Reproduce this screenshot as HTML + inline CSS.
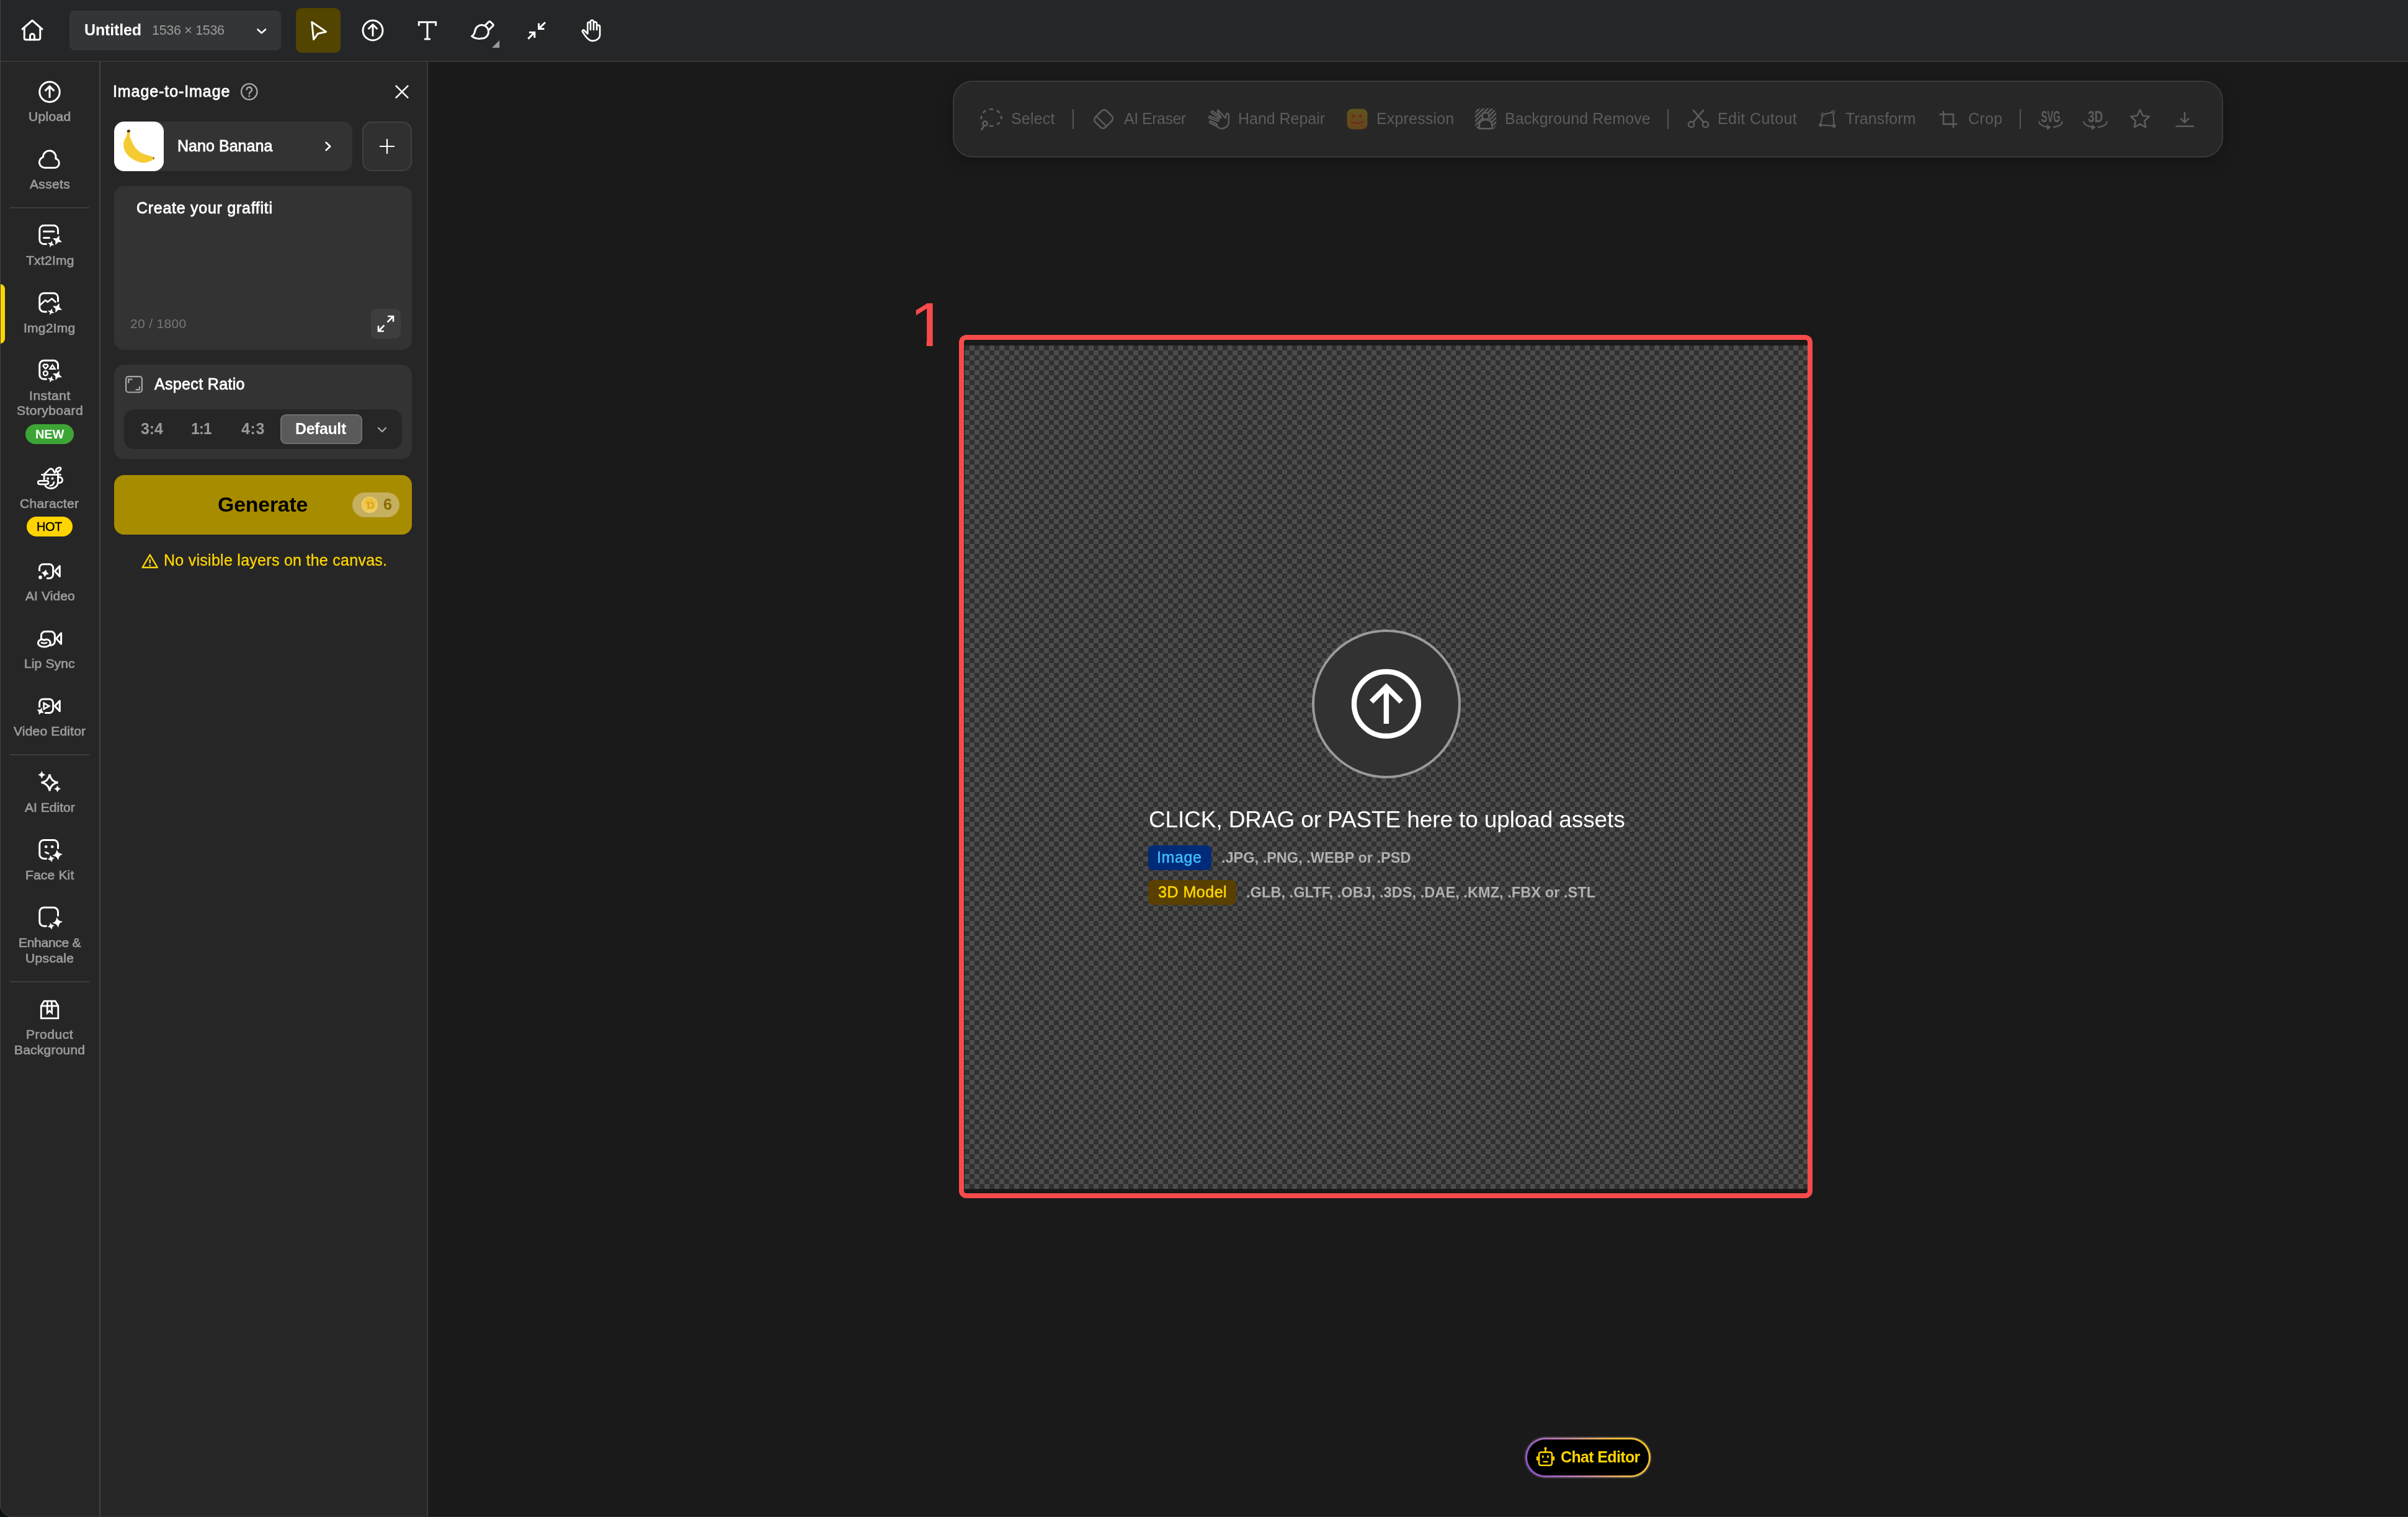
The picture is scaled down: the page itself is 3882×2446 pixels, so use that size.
<!DOCTYPE html>
<html lang="en"><head><meta charset="utf-8"><title>Untitled – Image-to-Image Editor</title>
<style>
*{box-sizing:border-box;margin:0;padding:0}
html,body{width:3882px;height:2446px;overflow:hidden;background:#1a1a1a}
body{position:relative;font-family:"Liberation Sans",sans-serif;color:#fff}
.abs,.tx,.ic{position:absolute}
.tx{white-space:nowrap;display:block;will-change:transform}
.ic{display:block;overflow:visible}
header{position:absolute;left:0;top:0;width:3882px;height:100px;background:#252627;border-bottom:2px solid #363636}
nav{position:absolute;left:0;top:100px;width:162px;height:2346px;background:#262626;border-right:2px solid #424242}
#panel{position:absolute;left:162px;top:100px;width:528px;height:2346px;background:#262626;border-right:2px solid #3a3a3a}
main{position:absolute;left:690px;top:100px;width:3192px;height:2346px;background:#1a1a1a}
.sep{position:absolute;left:16px;width:128px;height:2px;background:#3d3d3d}
.card{position:absolute;background:#333;border-radius:16px}
</style></head><body>

<header>
<svg class="ic" style="left:30px;top:26px" width="44" height="44" viewBox="30 26 44 44"><path d="M36 47L52 33L68 47" stroke="#fff" stroke-width="3" fill="none" stroke-linecap="round" stroke-linejoin="round"/><path d="M39.2 45V61.5a2.5 2.5 0 0 0 2.5 2.5H62.3a2.5 2.5 0 0 0 2.5-2.5V45" stroke="#fff" stroke-width="3" fill="none" stroke-linecap="round" stroke-linejoin="round"/><path d="M48.5 64V58a3.5 3.5 0 0 1 7 0V64" stroke="#fff" stroke-width="3" fill="none" stroke-linecap="round" stroke-linejoin="round"/></svg>
<div class="abs" style="left:112px;top:17px;width:341px;height:64px;border-radius:8px;background:#343537"></div>
<span class="tx" id="t_title" style="left:135.6px;top:36px;font-size:25px;line-height:25px;font-weight:700;color:#ffffff;letter-spacing:-0.139px;">Untitled</span>
<span class="tx" id="t_size" style="left:245px;top:39px;font-size:21.5px;line-height:21.5px;font-weight:400;color:#9c9c9c;letter-spacing:-0.31px;">1536 × 1536</span>
<svg class="ic" style="left:410px;top:42px" width="24" height="16" viewBox="410 42 24 16"><path d="M415.5 47.5L421.7 53.2L428 47.5" stroke="#fff" stroke-width="2.6" fill="none" stroke-linecap="round" stroke-linejoin="round"/></svg>
<div class="abs" style="left:477px;top:13px;width:72px;height:72px;border-radius:9px;background:#534400"></div>
<svg class="ic" style="left:495px;top:28px" width="40" height="44" viewBox="495 28 40 44"><path d="M502.8 35.6L525.6 51.2L512.6 54.2L505.6 63.6Z" stroke="#fff" stroke-width="3" fill="none" stroke-linecap="round" stroke-linejoin="round"/></svg>
<svg class="ic" style="left:581px;top:29px" width="40" height="40" viewBox="581 29 40 40"><circle cx="601" cy="49" r="16" stroke="#fff" stroke-width="3" fill="none" stroke-linecap="round" stroke-linejoin="round"/><path d="M601 58.6V40M593.6 47L601 39.6L608.4 47" stroke="#fff" stroke-width="3" fill="none" stroke-linecap="butt" stroke-linejoin="miter"/></svg>
<svg class="ic" style="left:669px;top:29px" width="40" height="40" viewBox="669 29 40 40"><path d="M675.3 41.8V35.8H702.6V41.8M689 35.8V63M684 63H694" stroke="#fff" stroke-width="3" fill="none"/></svg>
<svg class="ic" style="left:755px;top:29px" width="54" height="52" viewBox="755 29 54 52"><path d="M760.6 58.4C763.8 56.6 765.2 53.4 765.9 49.6A10.9 10.9 0 1 1 776 62.1C770.5 63 764.8 61.6 760.6 58.4Z" stroke="#fff" stroke-width="3" fill="none" stroke-linecap="round" stroke-linejoin="round"/><path d="M781.6 41.3L788 35.2Q789.4 34 790.7 35.2L794.6 39Q795.8 40.3 794.8 41.6L787.6 48.6" stroke="#fff" stroke-width="3" fill="none" stroke-linecap="round" stroke-linejoin="round"/><path d="M805.2 64.9V77H793.1Z" fill="#9a9a9a"/></svg>
<svg class="ic" style="left:845px;top:29px" width="40" height="40" viewBox="845 29 40 40"><path d="M879 36L868.6 46.4M868.6 37.6V46.4H877.4M851.4 62.6L861.8 52.2M853 52.2H861.8V61" stroke="#fff" stroke-width="3" fill="none"/></svg>
<svg class="ic" style="left:933px;top:29px" width="40" height="42" viewBox="933 29 40 42"><path d="M947.3 54.4V38.2a2.35 2.35 0 0 1 4.7 0V48M952 38V35a2.5 2.5 0 0 1 5 0V48M957 38.5V38a2.55 2.55 0 0 1 5.1 0V48M962.1 44V43.2a2.5 2.5 0 0 1 5 0V56C967.1 62 961.5 65.9 954.8 65.9C950 65.9 946.5 62 943 57L939.3 51.5C938 49.5 940.3 47.5 942 49.3L947.3 54.4" stroke="#fff" fill="none" stroke-linecap="round" stroke-linejoin="round" stroke-width="2.7"/></svg>
</header>

<nav>
<div class="abs" style="left:0;top:358px;width:8px;height:96px;background:#ffd600;border-radius:0 8px 8px 0"></div>
<svg class="ic" style="left:60px;top:28px" width="40" height="40" viewBox="60 128 40 40"><circle cx="80" cy="148.2" r="16.2" stroke="#fff" stroke-width="3" fill="none" stroke-linecap="round" stroke-linejoin="round"/><path d="M80 157.8V139.4M72.6 146.6L80 139.2L87.4 146.6" stroke="#fff" stroke-width="3" fill="none" stroke-linecap="butt" stroke-linejoin="miter"/></svg>
<span class="tx" id="s_upload" style="left:45.7px;top:77px;font-size:21px;line-height:21px;font-weight:400;color:#9b9b9b;letter-spacing:0.346px;-webkit-text-stroke:0.7px #9b9b9b;">Upload</span>
<svg class="ic" style="left:60px;top:137px" width="40" height="40" viewBox="60 237 40 40"><path d="M72.3 270.6H88.3A7.6 7.6 0 0 0 89.7 255.7A10.3 10.3 0 1 0 69.4 253.3A8.9 8.9 0 0 0 72.3 270.6Z" stroke="#fff" stroke-width="3" fill="none" stroke-linecap="round" stroke-linejoin="round"/></svg>
<span class="tx" id="s_assets" style="left:47.8px;top:186px;font-size:21px;line-height:21px;font-weight:400;color:#9b9b9b;letter-spacing:0.336px;-webkit-text-stroke:0.7px #9b9b9b;">Assets</span>
<div class="sep" style="top:234px"></div>
<svg class="ic" style="left:60px;top:258px" width="42" height="42" viewBox="60 358 42 42"><path d="M74.5 393.5H70.8a7 7 0 0 1-7-7V370.5a7 7 0 0 1 7-7H86.5a7 7 0 0 1 7 7V376.5" stroke="#fff" stroke-width="3" fill="none" stroke-linecap="round" stroke-linejoin="round"/><path d="M70.5 373.3H87M70.5 383.6H79.5" stroke="#fff" stroke-width="3" fill="none" stroke-linecap="round" stroke-linejoin="round"/><path d="M95.2 380.4L95.2 386.1L99.4 390L93.7 390L89.8 394.2L89.8 388.5L85.6 384.6L91.3 384.6Z" fill="#fff" stroke="#fff" stroke-width="0.8" stroke-linejoin="round"/><path d="M83.8 388.8L84 392.6L87 395L83.2 395.2L80.8 398.2L80.6 394.4L77.6 392L81.4 391.8Z" fill="#fff" stroke="#fff" stroke-width="0.6" stroke-linejoin="round"/></svg>
<span class="tx" id="s_txt" style="left:41.7px;top:309px;font-size:21px;line-height:21px;font-weight:400;color:#9b9b9b;letter-spacing:0.272px;-webkit-text-stroke:0.7px #9b9b9b;">Txt2Img</span>
<svg class="ic" style="left:60px;top:367px" width="42" height="42" viewBox="60 467 42 42"><path d="M74.5 502.7H70.8a7 7 0 0 1-7-7V479.7a7 7 0 0 1 7-7H86.5a7 7 0 0 1 7 7V485.7" stroke="#fff" stroke-width="3" fill="none" stroke-linecap="round" stroke-linejoin="round"/><path d="M65 491.5L73.3 484L76.7 487L83.7 481.5L89.5 487" stroke="#fff" fill="none" stroke-linecap="round" stroke-linejoin="round" stroke-width="2.6"/><path d="M95.2 489.7L95.2 495.4L99.4 499.3L93.7 499.3L89.8 503.5L89.8 497.8L85.6 493.9L91.3 493.9Z" fill="#fff" stroke="#fff" stroke-width="0.8" stroke-linejoin="round"/><path d="M83.8 498.1L84 501.9L87 504.3L83.2 504.5L80.8 507.5L80.6 503.7L77.6 501.3L81.4 501.1Z" fill="#fff" stroke="#fff" stroke-width="0.6" stroke-linejoin="round"/></svg>
<span class="tx" id="s_img" style="left:38.4px;top:418px;font-size:21px;line-height:21px;font-weight:400;color:#9b9b9b;letter-spacing:0.264px;-webkit-text-stroke:0.7px #9b9b9b;">Img2Img</span>
<svg class="ic" style="left:60px;top:476px" width="42" height="42" viewBox="60 576 42 42"><path d="M74.5 611.3H70.8a7 7 0 0 1-7-7V588.3a7 7 0 0 1 7-7H86.5a7 7 0 0 1 7 7V594.3" stroke="#fff" stroke-width="3" fill="none" stroke-linecap="round" stroke-linejoin="round"/><g stroke="#fff" stroke-width="2.4" fill="none" stroke-linejoin="round"><path d="M73.5 594.6L69.7 590.7a2.35 2.35 0 0 1 3.8-2.5a2.35 2.35 0 0 1 3.8 2.5Z"/><path d="M84.6 588.6L88.7 594.7H80.5Z" stroke-linejoin="miter"/><circle cx="73.4" cy="601.9" r="3.5"/></g><path d="M95.2 598.4L95.2 604.1L99.4 608L93.7 608L89.8 612.2L89.8 606.5L85.6 602.6L91.3 602.6Z" fill="#fff" stroke="#fff" stroke-width="0.8" stroke-linejoin="round"/><path d="M83.8 606.7L84 610.5L87 612.9L83.2 613.1L80.8 616.1L80.6 612.3L77.6 609.9L81.4 609.7Z" fill="#fff" stroke="#fff" stroke-width="0.6" stroke-linejoin="round"/></svg>
<span class="tx" id="s_inst" style="left:46.5px;top:527px;font-size:21px;line-height:21px;font-weight:400;color:#9b9b9b;letter-spacing:0.549px;-webkit-text-stroke:0.7px #9b9b9b;">Instant</span>
<span class="tx" id="s_story" style="left:27px;top:551px;font-size:21px;line-height:21px;font-weight:400;color:#9b9b9b;letter-spacing:0.44px;-webkit-text-stroke:0.7px #9b9b9b;">Storyboard</span>
<div class="abs" style="left:41px;top:584px;width:78px;height:32px;border-radius:16px;background:#3da536"></div>
<span class="tx" id="s_new" style="left:56.5px;top:590px;font-size:20px;line-height:20px;font-weight:700;color:#ffffff;letter-spacing:-0.192px;">NEW</span>
<svg class="ic" style="left:58px;top:650px" width="46" height="44" viewBox="58 750 46 44"><g stroke="#fff" fill="none" stroke-linecap="round" stroke-linejoin="round" stroke-width="2.8"><path d="M67.5 765.4H97.3"/><path d="M71.3 764.8L79.8 756.6Q82.3 754.6 85 757L88 762.2Q89.8 760.8 90.3 759.6"/><path d="M92.7 760.4L93.6 764.2"/><path d="M71.2 766V774.5M72.5 782.3C74 785.8 78 787.5 82.2 787.5C88.5 787.5 93.5 783 93.5 777V766"/><rect x="61.3" y="775.4" width="16.7" height="5.4" rx="2.7"/><path d="M95 769.4a4.7 4.7 0 1 1 0 9.2"/><ellipse cx="94.1" cy="757.1" rx="4.5" ry="2.5" transform="rotate(-32 94.1 757.1)"/><path d="M86.9 777.6Q86.2 782.3 81 783.2"/></g><circle cx="77.1" cy="771.4" r="2" fill="#fff"/><circle cx="84.5" cy="771.4" r="2" fill="#fff"/></svg>
<span class="tx" id="s_char" style="left:32.1px;top:701px;font-size:21px;line-height:21px;font-weight:400;color:#9b9b9b;letter-spacing:0.361px;-webkit-text-stroke:0.7px #9b9b9b;">Character</span>
<div class="abs" style="left:43px;top:733px;width:74px;height:32px;border-radius:16px;background:#ffd400"></div>
<span class="tx" id="s_hot" style="left:58.8px;top:739px;font-size:20px;line-height:20px;font-weight:400;color:#000000;letter-spacing:-0.45px;-webkit-text-stroke:0.4px #000;">HOT</span>
<svg class="ic" style="left:58px;top:800px" width="46" height="42" viewBox="58 900 46 42"><path d="M63.6 921V915.7a6 6 0 0 1 6-6H79.6a6 6 0 0 1 6 6V926.4a6 6 0 0 1-6 6H75.1" stroke="#fff" stroke-width="3" fill="none" stroke-linejoin="round" stroke-linecap="butt"/><path d="M88.4 921L96.3 912.6V929.6Z" stroke="#fff" stroke-width="3" fill="none" stroke-linecap="round" stroke-linejoin="round"/><path d="M73.9 918.8L75.2 922.7L78.4 925.3L74.5 926.6L71.9 929.8L70.6 925.9L67.4 923.3L71.3 922Z" fill="#fff" stroke="#fff" stroke-width="0.6" stroke-linejoin="round"/><circle cx="65" cy="930.9" r="2.8" fill="#fff"/></svg>
<span class="tx" id="s_aiv" style="left:40.5px;top:850px;font-size:21px;line-height:21px;font-weight:400;color:#9b9b9b;letter-spacing:0.082px;-webkit-text-stroke:0.7px #9b9b9b;">AI Video</span>
<svg class="ic" style="left:56px;top:910px" width="50" height="40" viewBox="56 1010 50 40"><path d="M66.5 1030V1024.7a6.5 6.5 0 0 1 6.5-6.5H81.9a6.5 6.5 0 0 1 6.5 6.5V1033.9a6.5 6.5 0 0 1-6.5 6.5H79" stroke="#fff" stroke-width="3" fill="none" stroke-linecap="round" stroke-linejoin="round"/><path d="M90.7 1029.4L98.6 1020.8V1038.2Z" stroke="#fff" stroke-width="3" fill="none" stroke-linecap="round" stroke-linejoin="round"/><path d="M61.4 1037C61.4 1033.5 64.5 1031 68 1031C69.6 1031 70.4 1032 71.3 1032C72.2 1032 73 1031 74.6 1031C78.1 1031 81.2 1033.5 81.2 1037C81.2 1040.3 77 1043 71.3 1043C65.6 1043 61.4 1040.3 61.4 1037Z" fill="#262626" stroke="#fff" stroke-width="3" stroke-linejoin="round"/><path d="M67 1036.4Q71.1 1038.2 75.2 1036.4" stroke="#fff" stroke-width="2.6" fill="none" stroke-linecap="round"/></svg>
<span class="tx" id="s_lip" style="left:39px;top:959px;font-size:21px;line-height:21px;font-weight:400;color:#9b9b9b;letter-spacing:0.137px;-webkit-text-stroke:0.7px #9b9b9b;">Lip Sync</span>
<svg class="ic" style="left:58px;top:1020px" width="46" height="40" viewBox="58 1120 46 40"><path d="M63.6 1140.7V1133.3a6 6 0 0 1 6-6H79.6a6 6 0 0 1 6 6V1143.4a6 6 0 0 1-6 6H72.3" stroke="#fff" stroke-width="3" fill="none" stroke-linejoin="round" stroke-linecap="butt"/><path d="M88.4 1138.4L96.3 1130V1146.8Z" stroke="#fff" stroke-width="3" fill="none" stroke-linecap="round" stroke-linejoin="round"/><path d="M70.7 1133.7L79.3 1138.5L70.7 1143.3Z" stroke="#fff" stroke-width="2.6" fill="none" stroke-linejoin="miter"/><path d="M67.5 1141.7L67.6 1145.9L70.3 1149.1L66.1 1149.2L62.9 1151.9L62.8 1147.7L60.1 1144.5L64.3 1144.4Z" fill="#fff" stroke="#fff" stroke-width="0.6" stroke-linejoin="round"/></svg>
<span class="tx" id="s_ved" style="left:22.2px;top:1068px;font-size:21px;line-height:21px;font-weight:400;color:#9b9b9b;letter-spacing:0.188px;-webkit-text-stroke:0.7px #9b9b9b;">Video Editor</span>
<div class="sep" style="top:1116px"></div>
<svg class="ic" style="left:58px;top:1140px" width="44" height="44" viewBox="58 1240 44 44"><path d="M80 1248.4Q81.9 1259.9 93.4 1261.8Q81.9 1263.7 80 1275.2Q78.1 1263.7 66.6 1261.8Q78.1 1259.9 80 1248.4Z" stroke="#fff" fill="none" stroke-linecap="round" stroke-width="3" stroke-linejoin="miter"/><path d="M67.3 1243.8Q68.1 1248.5 72.8 1249.3Q68.1 1250.1 67.3 1254.8Q66.5 1250.1 61.8 1249.3Q66.5 1248.5 67.3 1243.8Z" fill="#fff" stroke="#fff" stroke-width="0.7" stroke-linejoin="round"/><path d="M92.6 1267Q93.3 1271.2 97.5 1271.9Q93.3 1272.6 92.6 1276.8Q91.9 1272.6 87.7 1271.9Q91.9 1271.2 92.6 1267Z" fill="#fff" stroke="#fff" stroke-width="0.7" stroke-linejoin="round"/></svg>
<span class="tx" id="s_aie" style="left:39.9px;top:1191px;font-size:21px;line-height:21px;font-weight:400;color:#9b9b9b;letter-spacing:0.02px;-webkit-text-stroke:0.7px #9b9b9b;">AI Editor</span>
<svg class="ic" style="left:60px;top:1250px" width="42" height="42" viewBox="60 1350 42 42"><path d="M74.5 1384.4H70.8a7 7 0 0 1-7-7V1361.4a7 7 0 0 1 7-7H86.5a7 7 0 0 1 7 7V1367.4" stroke="#fff" stroke-width="3" fill="none" stroke-linecap="round" stroke-linejoin="round"/><circle cx="74.2" cy="1365.3" r="2.3" fill="#fff"/><circle cx="84.2" cy="1365.3" r="2.3" fill="#fff"/><path d="M73.3 1374.2L78 1376.2" stroke="#fff" fill="none" stroke-linecap="round" stroke-linejoin="round" stroke-width="2.8"/><path d="M91.6 1370.9Q93.8 1376.9 100.2 1377.3Q94.2 1379.5 93.8 1385.9Q91.6 1379.9 85.2 1379.5Q91.2 1377.3 91.6 1370.9Z" fill="#fff" stroke="#fff" stroke-width="0.9" stroke-linejoin="round"/><path d="M81.3 1379.6Q83 1383.5 87.2 1383.5Q83.3 1385.2 83.3 1389.4Q81.6 1385.5 77.4 1385.5Q81.3 1383.8 81.3 1379.6Z" fill="#fff" stroke="#fff" stroke-width="0.7" stroke-linejoin="round"/></svg>
<span class="tx" id="s_face" style="left:40.5px;top:1300px;font-size:21px;line-height:21px;font-weight:400;color:#9b9b9b;letter-spacing:0.172px;-webkit-text-stroke:0.7px #9b9b9b;">Face Kit</span>
<svg class="ic" style="left:60px;top:1359px" width="42" height="42" viewBox="60 1459 42 42"><path d="M74.5 1493.3H70.8a7 7 0 0 1-7-7V1470.3a7 7 0 0 1 7-7H86.5a7 7 0 0 1 7 7V1476.3" stroke="#fff" stroke-width="3" fill="none" stroke-linecap="round" stroke-linejoin="round"/><path d="M91.6 1479.7Q93.8 1485.7 100.2 1486.1Q94.2 1488.3 93.8 1494.7Q91.6 1488.7 85.2 1488.3Q91.2 1486.1 91.6 1479.7Z" fill="#fff" stroke="#fff" stroke-width="0.9" stroke-linejoin="round"/><path d="M81.3 1488.4Q83 1492.3 87.2 1492.3Q83.3 1494 83.3 1498.2Q81.6 1494.3 77.4 1494.3Q81.3 1492.6 81.3 1488.4Z" fill="#fff" stroke="#fff" stroke-width="0.7" stroke-linejoin="round"/></svg>
<span class="tx" id="s_enh" style="left:29.6px;top:1409px;font-size:21px;line-height:21px;font-weight:400;color:#9b9b9b;letter-spacing:-0.292px;-webkit-text-stroke:0.7px #9b9b9b;">Enhance &amp;</span>
<span class="tx" id="s_ups" style="left:41px;top:1434px;font-size:21px;line-height:21px;font-weight:400;color:#9b9b9b;letter-spacing:0.352px;-webkit-text-stroke:0.7px #9b9b9b;">Upscale</span>
<div class="sep" style="top:1482px"></div>
<svg class="ic" style="left:60px;top:1508px" width="40" height="40" viewBox="60 1608 40 40"><path d="M66.3 1622L71.2 1614.1H89L93.8 1622V1641.8H66.3Z" stroke="#fff" stroke-width="2.8" fill="none" stroke-linejoin="miter"/><path d="M66.3 1622H93.8" stroke="#fff" stroke-width="2.8"/><path d="M76.7 1614.1L76.2 1622V1633.4L79.9 1630L83.6 1633.4V1622L83.2 1614.1" stroke="#fff" stroke-width="2.8" fill="none"/></svg>
<span class="tx" id="s_prod" style="left:41.7px;top:1557px;font-size:21px;line-height:21px;font-weight:400;color:#9b9b9b;letter-spacing:0.527px;-webkit-text-stroke:0.7px #9b9b9b;">Product</span>
<span class="tx" id="s_bg" style="left:22.8px;top:1582px;font-size:21px;line-height:21px;font-weight:400;color:#9b9b9b;letter-spacing:0.212px;-webkit-text-stroke:0.7px #9b9b9b;">Background</span>
</nav>

<section id="panel">
<span class="tx" id="p_title" style="left:20.2px;top:35px;font-size:25px;line-height:25px;font-weight:400;color:#ffffff;letter-spacing:0.918px;-webkit-text-stroke:0.8px #fff;">Image-to-Image</span>
<svg class="ic" style="left:224px;top:32px" width="32" height="32" viewBox="386 132 32 32"><circle cx="401.8" cy="147.8" r="12.7" stroke="#a8a8a8" stroke-width="2.4" fill="none"/><path d="M397.7 144.6a4.1 4.1 0 1 1 6.1 3.6c-1.4.800-2 1.6-2 3.1" stroke="#a8a8a8" stroke-width="2.4" fill="none" stroke-linecap="round"/><circle cx="401.8" cy="154.9" r="1.5" fill="#a8a8a8"/></svg>
<svg class="ic" style="left:472px;top:34px" width="28" height="28" viewBox="634 134 28 28"><path d="M638.6 138.6L657.4 157.4M657.4 138.6L638.6 157.4" stroke="#fff" stroke-width="2.6" stroke-linecap="round"/></svg>
<div class="card" style="left:22px;top:96px;width:384px;height:80px;border-radius:15px"></div>
<div class="abs" style="left:22px;top:96px;width:80px;height:80px;border-radius:16px;background:#fff"></div>
<svg class="ic" style="left:22px;top:96px" width="80" height="80" viewBox="184 196 80 80"><path d="M205.2 213C204.8 216 204.5 218.5 203.6 220.2C201.5 223.5 199.6 226.5 199.2 232C198.8 238 200.5 243 204 247.5C209 254.5 217 259.5 227 262C234 263.3 241.5 261.5 248.3 256.6L247 253.2C243 251.6 238 250.6 233 248.8C225 246 219 240.5 215.3 233.5C212.8 228.5 210.4 224.5 209.3 220C208.8 217.5 209 215.5 209.3 213Z" fill="#f5cb31"/><ellipse cx="207.3" cy="211.3" rx="2.7" ry="2.2" fill="#5c3310" transform="rotate(-15 207.3 211.3)"/><ellipse cx="247.7" cy="255.1" rx="0.9" ry="1.8" fill="#5c3310" transform="rotate(-15 247.7 255.1)"/></svg>
<span class="tx" id="p_model" style="left:124.3px;top:123px;font-size:25px;line-height:25px;font-weight:400;color:#ffffff;letter-spacing:0.04px;-webkit-text-stroke:0.8px #fff;">Nano Banana</span>
<svg class="ic" style="left:356px;top:124px" width="20" height="24" viewBox="518 224 20 24"><path d="M525.6 229.8L532.2 236L525.6 242.2" stroke="#fff" stroke-width="2.6" fill="none" stroke-linecap="round" stroke-linejoin="round"/></svg>
<div class="abs" style="left:422px;top:96px;width:80px;height:80px;border-radius:15px;background:#303030;border:2px solid #414141"></div>
<svg class="ic" style="left:446px;top:120px" width="32" height="32" viewBox="608 220 32 32"><path d="M612 236H636M624 224V248" stroke="#fff" stroke-width="2.2"/></svg>
<div class="card" style="left:22px;top:200px;width:480px;height:264px"></div>
<span class="tx" id="p_prompt" style="left:57.5px;top:223px;font-size:25px;line-height:25px;font-weight:400;color:#ffffff;letter-spacing:0.73px;-webkit-text-stroke:0.8px #fff;">Create your graffiti</span>
<span class="tx" id="p_count" style="left:47.5px;top:411px;font-size:21px;line-height:21px;font-weight:400;color:#787878;letter-spacing:0.325px;">20 / 1800</span>
<div class="abs" style="left:436px;top:398px;width:48px;height:48px;border-radius:9px;background:#3e3e3e"></div>
<svg class="ic" style="left:436px;top:398px" width="48" height="48" viewBox="598 498 48 48"><path d="M634 510L624.5 519.5M625.2 510H634V518.8M610 534L619.5 524.5M610 525.2V534H618.8" stroke="#fff" stroke-width="2.6" fill="none"/></svg>
<div class="card" style="left:22px;top:488px;width:480px;height:152px"></div>
<svg class="ic" style="left:38px;top:504px" width="32" height="32" viewBox="200 604 32 32"><rect x="203.1" y="607.1" width="25.8" height="25.4" rx="4" stroke="#a8a8a8" stroke-width="2.2" fill="none"/><path d="M207.2 617.8V611.6H213.4M218.6 628.4H224.8V623" stroke="#a8a8a8" stroke-width="2.2" fill="none"/></svg>
<span class="tx" id="p_aspect" style="left:86.6px;top:507px;font-size:25px;line-height:25px;font-weight:400;color:#ffffff;letter-spacing:0.343px;-webkit-text-stroke:0.8px #fff;">Aspect Ratio</span>
<div class="abs" style="left:38px;top:560px;width:448px;height:64px;border-radius:16px;background:#262626"></div>
<span class="tx" id="p_r34" style="left:64.6px;top:579px;font-size:25px;line-height:25px;font-weight:700;color:#9a9a9a;letter-spacing:-0.065px;">3:4</span>
<span class="tx" id="p_r11" style="left:145.99px;top:579px;font-size:25px;line-height:25px;font-weight:700;color:#9a9a9a;letter-spacing:-1.2px;">1:1</span>
<span class="tx" id="p_r43" style="left:226.7px;top:579px;font-size:25px;line-height:25px;font-weight:700;color:#9a9a9a;letter-spacing:0.685px;">4:3</span>
<div class="abs" style="left:290px;top:568px;width:132px;height:48px;border-radius:9px;background:#5a5a5a;border:2px solid #707070"></div>
<span class="tx" id="p_def" style="left:314.3px;top:579px;font-size:25px;line-height:25px;font-weight:700;color:#ffffff;letter-spacing:-0.417px;">Default</span>
<svg class="ic" style="left:442px;top:582px" width="24" height="20" viewBox="604 682 24 20"><path d="M610 690L616 696L622 690" stroke="#a8a8a8" stroke-width="2.4" fill="none" stroke-linecap="round" stroke-linejoin="round"/></svg>
<div class="abs" style="left:22px;top:666px;width:480px;height:96px;border-radius:16px;background:#a88c00"></div>
<span class="tx" id="p_gen" style="left:189.4px;top:697px;font-size:33.8px;line-height:33.8px;font-weight:700;color:#000000;letter-spacing:-0.161px;">Generate</span>
<div class="abs" style="left:406px;top:694px;width:76px;height:40px;border-radius:20px;background:#c4b05e"></div>
<svg class="ic" style="left:418px;top:698px" width="32" height="32" viewBox="580 798 32 32"><defs><linearGradient id="cg" x1="0" y1="0" x2="0" y2="1"><stop offset="0" stop-color="#eebd38"/><stop offset="1" stop-color="#f1cf5e"/></linearGradient></defs><circle cx="595.9" cy="813.9" r="13.2" fill="#f0cd66"/><circle cx="595.9" cy="813.9" r="10.8" fill="url(#cg)"/><path d="M592.4 808.9H595.4V820.9H592.4V811.4L590.9 811.9V809.7ZM596.8 808.9C605.2 808.9 605.2 820.9 596.8 820.9V818C601.6 818 601.6 811.8 596.8 811.8Z" fill="#d8a616"/></svg>
<span class="tx" id="p_cost" style="left:455.8px;top:701px;font-size:25px;line-height:25px;font-weight:700;color:#876900;letter-spacing:0px;">6</span>
<svg class="ic" style="left:64px;top:790px" width="32" height="30" viewBox="226 890 32 30"><path d="M241.7 894.6L253.8 915H229.6Z" stroke="#ffd600" stroke-width="2.4" fill="none" stroke-linejoin="round"/><path d="M241.7 901.8V908.4" stroke="#ffd600" stroke-width="2.4"/><circle cx="241.7" cy="911.7" r="1.4" fill="#ffd600"/></svg>
<span class="tx" id="p_warn" style="left:101.9px;top:791px;font-size:25px;line-height:25px;font-weight:400;color:#ffd600;letter-spacing:0.274px;-webkit-text-stroke:0.3px #ffd600;">No visible layers on the canvas.</span>
</section>

<main>
<div class="abs" style="left:846px;top:30px;width:2048px;height:124px;border-radius:32px;background:#272727;border:2px solid #383838;box-shadow:0 8px 24px rgba(0,0,0,.25)"></div>
<svg class="ic" style="left:888px;top:70px" width="40" height="42" viewBox="1578 170 40 42"><path d="M1601.3 176.3A16.1 13.6 0 0 0 1594.9 176.3M1611.5 182.1A16.1 13.6 0 0 0 1607 178.3M1613.9 192.3A16.1 13.6 0 0 0 1613.9 186.9M1607 200.9A16.1 13.6 0 0 0 1611.5 197.1M1594.9 202.9A16.1 13.6 0 0 0 1601.3 202.9M1582.3 186.9A16.1 13.6 0 0 0 1582.3 192.3M1589.2 178.3A16.1 13.6 0 0 0 1584.7 182.1" stroke="#5c5c5c" stroke-width="2.7" fill="none"/><circle cx="1588" cy="199.3" r="3.6" stroke="#5c5c5c" stroke-width="2.8" fill="none"/><path d="M1586.2 202.6L1582.7 209" stroke="#5c5c5c" stroke-width="2.8" stroke-linecap="round"/></svg>
<span class="tx" id="b_select" style="left:940.3px;top:79px;font-size:25px;line-height:25px;font-weight:400;color:#5c5c5c;letter-spacing:0.173px;">Select</span>
<div class="abs" style="left:1039px;top:76px;width:2px;height:32px;background:#555"></div>
<svg class="ic" style="left:1070px;top:74px" width="38" height="38" viewBox="1760 174 38 38"><g transform="translate(1779.1 192) rotate(45)" stroke="#5c5c5c" stroke-width="2.6" fill="none" stroke-linecap="round" stroke-linejoin="round"><rect x="-11.5" y="-12.8" width="23" height="25.6" rx="5.5"/><path d="M-11.5 5H11.5"/></g></svg>
<span class="tx" id="b_eraser" style="left:1122.1px;top:79px;font-size:25px;line-height:25px;font-weight:400;color:#5c5c5c;letter-spacing:-0.509px;">AI Eraser</span>
<svg class="ic" style="left:1256px;top:72px" width="40" height="40" viewBox="1946 172 40 40"><path d="M1951.6 196.9L1960.5 201" stroke="#5c5c5c" stroke-width="5.4" stroke-linecap="round"/><path d="M1951.6 196.9L1960.5 201" stroke="#272727" stroke-width="1" stroke-linecap="round"/><path d="M1950.6 188.9L1963 193.8" stroke="#5c5c5c" stroke-width="5.4" stroke-linecap="round"/><path d="M1950.6 188.9L1963 193.8" stroke="#272727" stroke-width="1" stroke-linecap="round"/><path d="M1954.3 180.8L1966.6 189" stroke="#5c5c5c" stroke-width="5.4" stroke-linecap="round"/><path d="M1954.3 180.8L1966.6 189" stroke="#272727" stroke-width="1" stroke-linecap="round"/><path d="M1962.8 178.6L1966.6 189M1963.6 177.3L1975.5 190.3L1977 184.3Q1978 181.6 1980 183.2Q1980.9 184 1980.9 185.5V196.5C1980.9 203.5 1975 207.3 1969.6 207.3C1966 207.3 1964 205.6 1961 203.4L1952 198.5" stroke="#5c5c5c" stroke-width="2.4" fill="none" stroke-linecap="round" stroke-linejoin="round"/></svg>
<span class="tx" id="b_hand" style="left:1305.5px;top:79px;font-size:25px;line-height:25px;font-weight:400;color:#5c5c5c;letter-spacing:-0.033px;">Hand Repair</span>
<svg class="ic" style="left:1481px;top:75px" width="34" height="34" viewBox="2171 175 34 34"><defs><linearGradient id="eg" x1="0" y1="0" x2="0" y2="1"><stop offset="0" stop-color="#61541f"/><stop offset="1" stop-color="#66441c"/></linearGradient></defs><rect x="2171.6" y="175.5" width="33" height="33" rx="8.5" fill="url(#eg)"/><path d="M2179.3 184.2L2184 186.8L2179.3 189.4" stroke="#6f2a1c" stroke-width="2" fill="none" stroke-linecap="round" stroke-linejoin="round"/><circle cx="2193.2" cy="187" r="2.4" fill="#6f2a1c"/><path d="M2179 196.2Q2188 201.8 2197 196" stroke="#6f2a1c" stroke-width="2.2" fill="none" stroke-linecap="round"/></svg>
<span class="tx" id="b_expr" style="left:1528.5px;top:79px;font-size:25px;line-height:25px;font-weight:400;color:#5c5c5c;letter-spacing:0.17px;">Expression</span>
<svg class="ic" style="left:1688px;top:74px" width="35" height="36" viewBox="2378 174 35 36"><defs><clipPath id="bc"><rect x="2378" y="174.6" width="34.2" height="34.5" rx="9"/></clipPath></defs><g clip-path="url(#bc)"><path d="M2342.6 210L2378.6 174" stroke="#5c5c5c" stroke-width="2.7"/><path d="M2349.6 210L2385.6 174" stroke="#5c5c5c" stroke-width="2.7"/><path d="M2356.6 210L2392.6 174" stroke="#5c5c5c" stroke-width="2.7"/><path d="M2363.6 210L2399.6 174" stroke="#5c5c5c" stroke-width="2.7"/><path d="M2370.6 210L2406.6 174" stroke="#5c5c5c" stroke-width="2.7"/><path d="M2377.6 210L2413.6 174" stroke="#5c5c5c" stroke-width="2.7"/><path d="M2384.6 210L2420.6 174" stroke="#5c5c5c" stroke-width="2.7"/><path d="M2391.6 210L2427.6 174" stroke="#5c5c5c" stroke-width="2.7"/><path d="M2398.6 210L2434.6 174" stroke="#5c5c5c" stroke-width="2.7"/><path d="M2405.6 210L2441.6 174" stroke="#5c5c5c" stroke-width="2.7"/><path d="M2412.6 210L2448.6 174" stroke="#5c5c5c" stroke-width="2.7"/><circle cx="2395.1" cy="187.2" r="5.4" fill="#272727" stroke="#5c5c5c" stroke-width="2.6"/><path d="M2384.8 207.3V202.5Q2384.8 193.3 2395.1 193.3Q2405.4 193.3 2405.4 202.5V207.3Z" fill="#272727" stroke="#5c5c5c" stroke-width="2.6" stroke-linejoin="round"/></g></svg>
<span class="tx" id="b_bgr" style="left:1735.8px;top:79px;font-size:25px;line-height:25px;font-weight:400;color:#5c5c5c;letter-spacing:0.072px;">Background Remove</span>
<div class="abs" style="left:1998px;top:76px;width:2px;height:32px;background:#555"></div>
<svg class="ic" style="left:2030px;top:75px" width="36" height="34" viewBox="2720 175 36 34"><circle cx="2726.6" cy="200.7" r="4.6" stroke="#5c5c5c" stroke-width="2.6" fill="none" stroke-linecap="round" stroke-linejoin="round"/><circle cx="2749.4" cy="200.7" r="4.6" stroke="#5c5c5c" stroke-width="2.6" fill="none" stroke-linecap="round" stroke-linejoin="round"/><path d="M2729.6 197.2L2746.2 177.6M2746.4 197.2L2729.8 177.6" stroke="#5c5c5c" stroke-width="2.6" fill="none" stroke-linecap="round" stroke-linejoin="round"/></svg>
<span class="tx" id="b_cut" style="left:2079.2px;top:79px;font-size:25px;line-height:25px;font-weight:400;color:#5c5c5c;letter-spacing:0.406px;">Edit Cutout</span>
<svg class="ic" style="left:2240px;top:76px" width="32" height="32" viewBox="2930 176 32 32"><path d="M2938.4 184.7L2955.2 180.7L2956.7 203L2934.9 201.6Z" stroke="#5c5c5c" stroke-width="2.1" fill="none" stroke-linejoin="round"/><circle cx="2938.4" cy="184.7" r="2.2" stroke="#5c5c5c" stroke-width="1.7" fill="#272727"/><circle cx="2955.2" cy="180.7" r="2.2" stroke="#5c5c5c" stroke-width="1.7" fill="#272727"/><circle cx="2956.7" cy="203" r="2.9" fill="#5c5c5c"/><circle cx="2934.9" cy="201.6" r="2.9" fill="#5c5c5c"/></svg>
<span class="tx" id="b_trans" style="left:2285.3px;top:79px;font-size:25px;line-height:25px;font-weight:400;color:#5c5c5c;letter-spacing:0.069px;">Transform</span>
<svg class="ic" style="left:2435px;top:77px" width="32" height="32" viewBox="3125 177 32 32"><path d="M3133.1 179V200.1H3155.5M3126.7 184.3H3149V206" stroke="#5c5c5c" stroke-width="2.6" fill="none"/></svg>
<span class="tx" id="b_crop" style="left:2482.8px;top:79px;font-size:25px;line-height:25px;font-weight:400;color:#5c5c5c;letter-spacing:0.306px;">Crop</span>
<div class="abs" style="left:2566px;top:76px;width:2px;height:32px;background:#555"></div>
<svg class="ic" style="left:2596px;top:74px" width="40" height="38" viewBox="3286 174 40 38"><text x="3306" y="196.5" text-anchor="middle" font-family="Liberation Sans, sans-serif" font-weight="700" font-size="25" fill="#5c5c5c" textLength="31" lengthAdjust="spacingAndGlyphs">SVG</text><path d="M3287.5 196.5C3287.5 201 3295 204.5 3303 205.2" stroke="#5c5c5c" fill="none" stroke-linecap="round" stroke-linejoin="round" stroke-width="2.4"/><path d="M3324.5 196.5C3324.5 201 3318 204 3311 205" stroke="#5c5c5c" fill="none" stroke-linecap="round" stroke-linejoin="round" stroke-width="2.4"/><path d="M3300 200.5L3306.5 205.3L3300 210Z" fill="#5c5c5c"/></svg>
<svg class="ic" style="left:2668px;top:74px" width="40" height="38" viewBox="3358 174 40 38"><text x="3378" y="196.5" text-anchor="middle" font-family="Liberation Sans, sans-serif" font-weight="700" font-size="25" fill="#5c5c5c" textLength="24" lengthAdjust="spacingAndGlyphs">3D</text><path d="M3359.5 196.5C3359.5 201 3367 204.5 3375 205.2" stroke="#5c5c5c" fill="none" stroke-linecap="round" stroke-linejoin="round" stroke-width="2.4"/><path d="M3396.5 196.5C3396.5 201 3390 204 3383 205" stroke="#5c5c5c" fill="none" stroke-linecap="round" stroke-linejoin="round" stroke-width="2.4"/><path d="M3372 200.5L3378.5 205.3L3372 210Z" fill="#5c5c5c"/></svg>
<svg class="ic" style="left:2742px;top:74px" width="36" height="34" viewBox="3432 174 36 34"><path d="M3450 177L3454.5 186.5L3464.8 187.8L3457.2 194.9L3459.2 205.2L3450 200.2L3440.8 205.2L3442.8 194.9L3435.2 187.8L3445.5 186.5Z" stroke="#5c5c5c" stroke-width="2.6" fill="none" stroke-linecap="round" stroke-linejoin="round"/></svg>
<svg class="ic" style="left:2815px;top:76px" width="34" height="32" viewBox="3505 176 34 32"><path d="M3522 180.5V197M3515.2 190.6L3522 197.4L3528.8 190.6" stroke="#5c5c5c" stroke-width="2.6" fill="none"/><path d="M3507.4 203.6H3536.8" stroke="#5c5c5c" stroke-width="2.6"/></svg>
<span class="tx" id="c_one" style="left:779.6px;top:373px;font-size:100px;line-height:100px;font-weight:400;color:#f74b4b;letter-spacing:0px;clip-path:polygon(0 0,34px 0,34px 100%,24.8px 100%,24.8px 76.8px,0 76.8px);transform:scaleX(1.12);transform-origin:34px 0;">1</span>
<div class="abs" style="left:856px;top:440px;width:1376px;height:1392px;border:8px solid #f74b4b;border-radius:12px"></div>
<div class="abs" id="checker" style="left:865px;top:457px;width:1359px;height:1360px;background:repeating-conic-gradient(#4c4c4c 0% 25%,#303030 0% 50%) 0 0/16px 16px"></div>
<div class="abs" style="left:1425.3px;top:914.8px;width:240px;height:240px;border-radius:50%;background:#323232;border:4px solid #9a9a9a"></div>
<svg class="ic" style="left:1485px;top:975px" width="120" height="120" viewBox="2175 1075 120 120"><circle cx="2234.9" cy="1134.9" r="51.9" stroke="#fff" stroke-width="8.4" fill="none"/><path d="M2234.9 1167V1107.5M2210.9 1131.5L2234.9 1107.5L2258.9 1131.5" stroke="#fff" stroke-width="8.4" fill="none"/></svg>
<span class="tx" id="c_click" style="left:1161.5px;top:1203px;font-size:37px;line-height:37px;font-weight:400;color:#ffffff;letter-spacing:-0.118px;">CLICK, DRAG or PASTE here to upload assets</span>
<div class="abs" style="left:1161.3px;top:1263px;width:102px;height:40px;border-radius:8px;background:#002b78"></div>
<span class="tx" id="c_image" style="left:1175.4px;top:1270px;font-size:25px;line-height:25px;font-weight:400;color:#40bfff;letter-spacing:0.58px;-webkit-text-stroke:0.5px #40bfff;">Image</span>
<span class="tx" id="c_fmt1" style="left:1279.4px;top:1272px;font-size:23.6px;line-height:23.6px;font-weight:700;color:#b0b0b0;letter-spacing:-0.039px;">.JPG, .PNG, .WEBP or .PSD</span>
<div class="abs" style="left:1161.3px;top:1319.2px;width:142px;height:40px;border-radius:8px;background:#594000"></div>
<span class="tx" id="c_3d" style="left:1177.4px;top:1326px;font-size:25px;line-height:25px;font-weight:400;color:#ffd600;letter-spacing:0.523px;-webkit-text-stroke:0.5px #ffd600;">3D Model</span>
<span class="tx" id="c_fmt2" style="left:1319.3px;top:1328px;font-size:23.6px;line-height:23.6px;font-weight:700;color:#b0b0b0;letter-spacing:0.025px;">.GLB, .GLTF, .OBJ, .3DS, .DAE, .KMZ, .FBX or .STL</span>
<div class="abs" style="left:1767px;top:2216px;width:206px;height:68px;border-radius:34px;background:rgba(255,255,255,.13)"></div>
<div class="abs" style="left:1769px;top:2218px;width:202px;height:64px;border-radius:32px;background:linear-gradient(62deg,#8a4bd6 0%,#b57aa8 38%,#e6b04a 68%,#f7c81e 100%)"></div>
<div class="abs" style="left:1772px;top:2221px;width:196px;height:58px;border-radius:29px;background:#000"></div>
<svg class="ic" style="left:1785px;top:2232px" width="34" height="34" viewBox="2475 2332 34 34"><rect x="2481" y="2341.5" width="21" height="21.3" rx="3.5" stroke="#ffd600" stroke-width="2.6" fill="none" stroke-linecap="round" stroke-linejoin="round"/><path d="M2491.5 2341V2336.5" stroke="#ffd600" stroke-width="2.6" fill="none" stroke-linecap="round" stroke-linejoin="round"/><circle cx="2491.5" cy="2335.2" r="2" fill="#ffd600"/><path d="M2478.3 2349.5V2353.5M2504.7 2349.5V2353.5" stroke="#ffd600" fill="none" stroke-linecap="round" stroke-linejoin="round" stroke-width="3"/><ellipse cx="2487.3" cy="2348.8" rx="1.5" ry="2.2" fill="#ffd600"/><ellipse cx="2495.5" cy="2348.8" rx="1.5" ry="2.2" fill="#ffd600"/><path d="M2488.3 2356.8H2494.8" stroke="#ffd600" fill="none" stroke-linecap="round" stroke-linejoin="round" stroke-width="2.2"/></svg>
<span class="tx" id="c_chat" style="left:1825.7px;top:2237px;font-size:25px;line-height:25px;font-weight:700;color:#ffd600;letter-spacing:-0.639px;">Chat Editor</span>
</main>
<div class="abs" style="left:0;top:0;width:1px;height:2446px;background:#454545"></div>
<div class="abs" style="left:690px;top:2444px;width:3192px;height:1px;background:#131313"></div>
<div class="abs" style="left:0;top:2445px;width:3882px;height:1px;background:#363636"></div>
<svg class="ic" style="left:0;top:2426px" width="20" height="20" viewBox="0 0 20 20"><path d="M0 0V20H20A20 20 0 0 1 0 0Z" fill="#0a1113"/><path d="M0.5 0A19.5 19.5 0 0 0 20 19.5" stroke="#454545" stroke-width="1" fill="none"/></svg>
</body></html>
